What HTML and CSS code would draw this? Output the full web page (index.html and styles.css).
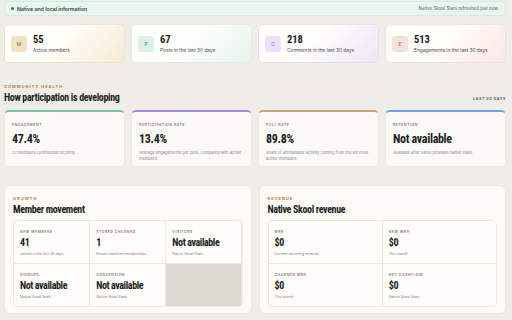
FILE: index.html
```html
<!DOCTYPE html>
<html>
<head>
  <meta charset="UTF-8">
  <title>Community stats</title>
  <link rel="stylesheet" href="styles.css">
</head>
<body>
  <div class="banner">
    <span class="banner-left"><span class="dot"></span>Native and local information</span>
    <span class="banner-right">Native Skool Stats refreshed just now.</span>
  </div>

  <div class="stats">
    <div class="stat gold">
      <div class="badge">M</div>
      <div>
        <div class="stat-num">55</div>
        <div class="stat-label">Active members</div>
      </div>
    </div>
    <div class="stat green">
      <div class="badge">P</div>
      <div>
        <div class="stat-num">67</div>
        <div class="stat-label">Posts in the last 30 days</div>
      </div>
    </div>
    <div class="stat purple">
      <div class="badge">C</div>
      <div>
        <div class="stat-num">218</div>
        <div class="stat-label">Comments in the last 30 days</div>
      </div>
    </div>
    <div class="stat red">
      <div class="badge">E</div>
      <div>
        <div class="stat-num">513</div>
        <div class="stat-label">Engagements in the last 30 days</div>
      </div>
    </div>
  </div>

  <div class="section-head">
    <div>
      <div class="eyebrow">Community health</div>
      <h2 class="title">How participation is developing</h2>
    </div>
    <div class="range">Last 30 days</div>
  </div>

  <div class="health">
    <div class="hcard teal">
      <div class="label">Engagement</div>
      <div class="hvalue">47.4%</div>
      <div class="desc">27 members contributed recently.</div>
    </div>
    <div class="hcard violet">
      <div class="label">Participation rate</div>
      <div class="hvalue">13.4%</div>
      <div class="desc">Average engagements per post, compared with active members.</div>
    </div>
    <div class="hcard tan">
      <div class="label">Pull rate</div>
      <div class="hvalue">89.8%</div>
      <div class="desc">Share of attributable activity coming from the six most active members.</div>
    </div>
    <div class="hcard blue">
      <div class="label">Retention</div>
      <div class="hvalue">Not available</div>
      <div class="desc">Available after Skool provides native Stats.</div>
    </div>
  </div>

  <div class="panels">
    <div class="panel">
      <div class="eyebrow">Growth</div>
      <h3 class="panel-title">Member movement</h3>
      <div class="grid three">
        <div class="cell">
          <div class="label">New members</div>
          <div class="cvalue">41</div>
          <div class="cdesc">Joined in the last 30 days</div>
        </div>
        <div class="cell">
          <div class="label">Stored churned</div>
          <div class="cvalue">1</div>
          <div class="cdesc">Known inactive memberships</div>
        </div>
        <div class="cell">
          <div class="label">Visitors</div>
          <div class="cvalue">Not available</div>
          <div class="cdesc">Native Skool Stats</div>
        </div>
        <div class="cell">
          <div class="label">Signups</div>
          <div class="cvalue">Not available</div>
          <div class="cdesc">Native Skool Stats</div>
        </div>
        <div class="cell">
          <div class="label">Conversion</div>
          <div class="cvalue">Not available</div>
          <div class="cdesc">Native Skool Stats</div>
        </div>
        <div class="cell empty"></div>
      </div>
    </div>

    <div class="panel">
      <div class="eyebrow">Revenue</div>
      <h3 class="panel-title">Native Skool revenue</h3>
      <div class="grid two">
        <div class="cell">
          <div class="label">MRR</div>
          <div class="cvalue">$0</div>
          <div class="cdesc">Current recurring revenue</div>
        </div>
        <div class="cell">
          <div class="label">New MRR</div>
          <div class="cvalue">$0</div>
          <div class="cdesc">This month</div>
        </div>
        <div class="cell">
          <div class="label">Churned MRR</div>
          <div class="cvalue">$0</div>
          <div class="cdesc">This month</div>
        </div>
        <div class="cell">
          <div class="label">Net cashflow</div>
          <div class="cvalue">$0</div>
          <div class="cdesc">Native Skool Stats</div>
        </div>
      </div>
    </div>
  </div>
</body>
</html>
```

FILE: styles.css
```css
* {
  margin: 0;
  padding: 0;
  box-sizing: border-box;
}

body {
  background: #efede7;
  font-family: "Inter", "Liberation Sans", sans-serif;
  color: #1b1d22;
  width: 512px;
  padding: 1px 6px 0 4px;
}

/* condensed headings and figures */
.stat-num, .title, .hvalue, .panel-title, .cvalue {
  font-family: "Roboto", sans-serif;
  font-stretch: 75%;
  font-weight: 700;
}

.banner {
  height: 15px;
  display: flex;
  align-items: center;
  justify-content: space-between;
  background: #e9f5ef;
  border: 1px solid #d4ebe1;
  border-radius: 4px;
  padding: 0 6px;
}
.banner-left {
  display: flex;
  align-items: center;
  gap: 3px;
  font-size: 5.2px;
  font-weight: 600;
  color: #1d4a3a;
}
.dot {
  width: 3px;
  height: 3px;
  border-radius: 50%;
  background: #1f7a5a;
}
.banner-right {
  font-size: 4.5px;
  color: #4d6a5f;
}

.stats {
  display: grid;
  grid-template-columns: repeat(4, 1fr);
  gap: 6px;
  margin-top: 8px;
}
.stat {
  height: 39px;
  display: flex;
  align-items: center;
  gap: 6px;
  padding: 0 6px;
  border-radius: 5px;
  border: 1px solid #ece6da;
}
.badge {
  width: 16px;
  height: 16px;
  border-radius: 3px;
  display: flex;
  align-items: center;
  justify-content: center;
  font-size: 5px;
}
.stat-num {
  font-size: 10.5px;
  line-height: 10px;
}
.stat-label {
  font-size: 4.8px;
  color: #4a4c52;
  margin-top: 2px;
}
.gold { background: linear-gradient(135deg, #fffefa 45%, #f6e9d3); border-color: #f1e4cf; }
.gold .badge { background: #f1e2c6; color: #7f6440; }
.green { background: linear-gradient(135deg, #fffefa 45%, #e5f4ec); border-color: #dcefe5; }
.green .badge { background: #dcf0e6; color: #3f8a69; }
.purple { background: linear-gradient(135deg, #fffefa 45%, #ebe6f8); border-color: #e6e0f4; }
.purple .badge { background: #e9e2f8; color: #7a62c0; }
.red { background: linear-gradient(135deg, #fffefa 45%, #fbe6e3); border-color: #f6dedb; }
.red .badge { background: #f9dfdc; color: #c25550; }

.section-head {
  display: flex;
  justify-content: space-between;
  align-items: flex-end;
  margin-top: 21px;
}
.eyebrow {
  font-size: 4px;
  font-weight: 700;
  letter-spacing: 1px;
  text-transform: uppercase;
  color: #b27d3f;
}
.title {
  font-size: 10px;
  letter-spacing: -0.35px;
  margin-top: 3px;
  line-height: 12px;
}
.range {
  font-size: 3.6px;
  font-weight: 700;
  letter-spacing: 0.6px;
  text-transform: uppercase;
  color: #5a5c60;
  margin-bottom: 3px;
}

.health {
  display: grid;
  grid-template-columns: repeat(4, 1fr);
  gap: 6px;
  margin-top: 6px;
}
.hcard {
  height: 57px;
  background: #fbfaf6;
  border: 1px solid #ebe8e0;
  border-top: 2px solid;
  border-radius: 5px;
  padding: 11px 7px 0;
}
.teal { border-top-color: #7dbfa8; }
.violet { border-top-color: #a28ee0; }
.tan { border-top-color: #cda67a; }
.blue { border-top-color: #6f9ff1; }

.label {
  font-size: 3.4px;
  font-weight: 600;
  letter-spacing: 0.6px;
  text-transform: uppercase;
  color: #7a7b80;
}
.hvalue {
  font-size: 12px;
  line-height: 12px;
  letter-spacing: -0.3px;
  margin-top: 6px;
}
.desc {
  font-size: 4px;
  line-height: 5.5px;
  color: #86878b;
  margin-top: 5px;
}

.panels {
  display: grid;
  grid-template-columns: 1fr 1fr;
  gap: 7px;
  margin-top: 18px;
}
.panel {
  height: 129px;
  background: #fcfbf7;
  border: 1px solid #ebe8df;
  border-radius: 6px;
  padding: 10px 8px 0;
}
.panel-title {
  font-size: 10px;
  letter-spacing: -0.35px;
  line-height: 12px;
  margin-top: 3px;
}
.grid {
  display: grid;
  margin-top: 4px;
  background: #ebe9e2;
  border: 1px solid #ebe9e2;
  border-radius: 5px;
  gap: 1px;
  overflow: hidden;
}
.three { grid-template-columns: repeat(3, 1fr); }
.two { grid-template-columns: repeat(2, 1fr); }
.cell {
  height: 42px;
  background: #fefdfa;
  padding: 9px 6px 0;
}
.cell.empty {
  background: #dcdad0;
}
.cvalue {
  font-size: 10px;
  line-height: 10px;
  letter-spacing: -0.4px;
  margin-top: 4px;
}
.cdesc {
  font-size: 3.6px;
  color: #7d7e82;
  margin-top: 4px;
}
```
